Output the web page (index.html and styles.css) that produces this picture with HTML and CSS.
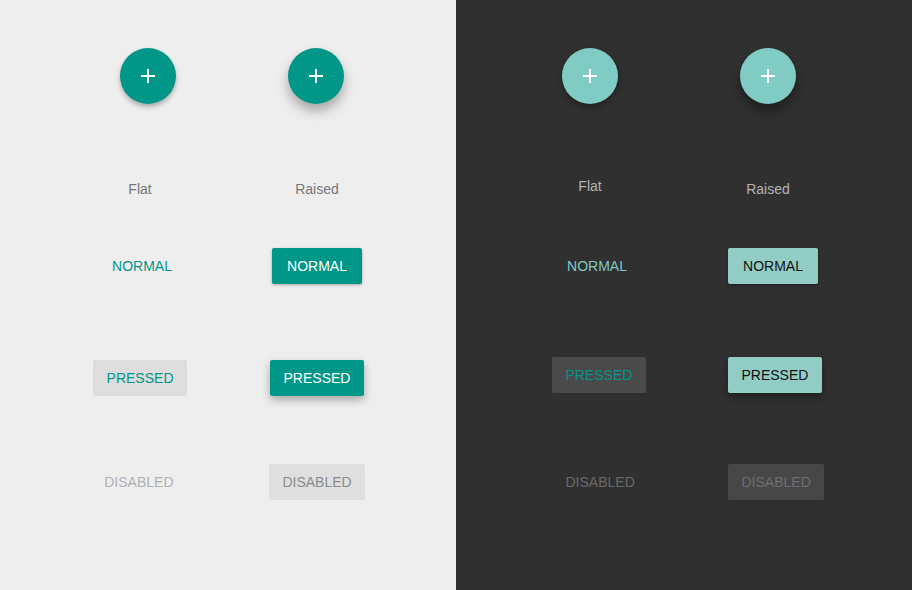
FILE: index.html
```html
<!DOCTYPE html>
<html>
<head>
<meta charset="utf-8">
<link rel="stylesheet" href="styles.css">
</head>
<body>
<div class="page">
  <section class="panel light">
    <div class="row fab-row">
      <div class="cell fab-a"><div class="fab fab-flat"><svg width="14" height="14" viewBox="0 0 14 14"><path d="M7 0v14M0 7h14" stroke="#fff" stroke-width="2"/></svg></div></div>
      <div class="cell fab-b"><div class="fab fab-raised"><svg width="14" height="14" viewBox="0 0 14 14"><path d="M7 0v14M0 7h14" stroke="#fff" stroke-width="2"/></svg></div></div>
    </div>
    <div class="row label-row">
      <div class="cell"><span class="label">Flat</span></div>
      <div class="cell"><span class="label">Raised</span></div>
    </div>
    <div class="row btn-row r-normal">
      <div class="cell flat-col"><div class="btn flat">NORMAL</div></div>
      <div class="cell"><div class="btn raised">NORMAL</div></div>
    </div>
    <div class="row btn-row r-pressed">
      <div class="cell flat-col"><div class="btn flat pressed">PRESSED</div></div>
      <div class="cell"><div class="btn raised pressed">PRESSED</div></div>
    </div>
    <div class="row btn-row r-disabled">
      <div class="cell flat-col"><div class="btn flat disabled">DISABLED</div></div>
      <div class="cell"><div class="btn raised disabled">DISABLED</div></div>
    </div>
  </section>
  <section class="panel dark">
    <div class="row fab-row">
      <div class="cell"><div class="fab fab-flat"><svg width="14" height="14" viewBox="0 0 14 14"><path d="M7 0v14M0 7h14" stroke="#fff" stroke-width="2"/></svg></div></div>
      <div class="cell"><div class="fab fab-raised"><svg width="14" height="14" viewBox="0 0 14 14"><path d="M7 0v14M0 7h14" stroke="#fff" stroke-width="2"/></svg></div></div>
    </div>
    <div class="row label-row">
      <div class="cell"><span class="label label-up">Flat</span></div>
      <div class="cell"><span class="label">Raised</span></div>
    </div>
    <div class="row btn-row r-normal">
      <div class="cell flat-col"><div class="btn flat">NORMAL</div></div>
      <div class="cell raised-col"><div class="btn raised">NORMAL</div></div>
    </div>
    <div class="row btn-row r-pressed">
      <div class="cell flat-col"><div class="btn flat pressed">PRESSED</div></div>
      <div class="cell raised-col"><div class="btn raised pressed">PRESSED</div></div>
    </div>
    <div class="row btn-row r-disabled">
      <div class="cell flat-col"><div class="btn flat disabled">DISABLED</div></div>
      <div class="cell raised-col"><div class="btn raised disabled">DISABLED</div></div>
    </div>
  </section>
</div>
</body>
</html>
```
FILE: styles.css
```css
html, body {
  margin: 0;
  padding: 0;
}
body {
  font-family: "Liberation Sans", Arial, sans-serif;
  font-size: 14px;
}
.page {
  display: flex;
  width: 912px;
  height: 590px;
}
.panel {
  width: 456px;
  height: 590px;
  box-sizing: border-box;
  padding-top: 48px;
  display: flex;
  flex-direction: column;
}
.light {
  background: #eeeeee;
  padding-left: 60px;
}
.dark {
  background: #303030;
  padding-left: 54px;
}
.row {
  display: flex;
}
.light .row { gap: 17px; }
.dark .row { gap: 18px; }
.cell {
  width: 160px;
  box-sizing: border-box;
  display: flex;
  justify-content: center;
  align-items: flex-start;
}
.fab-row { height: 56px; }
.light .fab-a { padding-left: 16px; }
.light .fab-b { padding-right: 2px; }
.fab {
  width: 56px;
  height: 56px;
  border-radius: 50%;
  display: flex;
  align-items: center;
  justify-content: center;
}
.fab svg { display: block; }
.light .fab { background: #009688; }
.dark .fab { background: #80cbc4; }
.light .fab-flat { box-shadow: 0 3px 5px rgba(0,0,0,0.28); }
.light .fab-raised { box-shadow: 0 7px 12px rgba(0,0,0,0.3); }
.dark .fab-flat { box-shadow: 0 3px 6px rgba(0,0,0,0.35); }
.dark .fab-raised { box-shadow: 0 7px 12px rgba(0,0,0,0.4); }

.label-row {
  margin-top: 75px;
  height: 20px;
}
.label {
  line-height: 20px;
  font-size: 14px;
}
.light .label { color: #777777; }
.dark .label { color: #b4b4b4; }
.label-up { margin-top: -3px; }

.btn-row { height: 36px; }
.r-normal { margin-top: 49px; }
.light .r-pressed { margin-top: 76px; }
.light .r-disabled { margin-top: 68px; }
.dark .r-pressed { margin-top: 73px; }
.dark .r-disabled { margin-top: 71px; }

.light .flat-col { justify-content: flex-end; padding-right: 33px; }
.dark .flat-col { justify-content: flex-start; padding-left: 42px; }
.dark .raised-col { justify-content: flex-start; padding-left: 40px; }

.btn {
  height: 36px;
  line-height: 36px;
  min-width: 90px;
  padding: 0 13.5px;
  box-sizing: border-box;
  border-radius: 2px;
  text-align: center;
  font-size: 14px;
  white-space: nowrap;
}
.light .flat { color: #009688; }
.light .flat.pressed { background: #dddddd; }
.light .flat.disabled { color: #b0b0b0; }
.light .raised {
  background: #009688;
  color: #ffffff;
  box-shadow: 0 1px 3px rgba(0,0,0,0.3);
}
.light .raised.pressed { box-shadow: 0 4px 9px rgba(0,0,0,0.3); }
.light .raised.disabled {
  background: #dfdfdf;
  color: #8a8a8a;
  box-shadow: none;
}

.dark .flat { color: #80cbc4; }
.dark .flat.pressed { background: #4a4a4a; color: #009688; }
.dark .flat.disabled { color: #6a6a6a; }
.dark .raised {
  background: #92cdc5;
  color: #111111;
  box-shadow: 0 1px 3px rgba(0,0,0,0.4);
}
.dark .raised.pressed { box-shadow: 0 4px 9px rgba(0,0,0,0.4); }
.dark .raised.disabled {
  background: #474747;
  color: #6e6e6e;
  box-shadow: none;
}
```
